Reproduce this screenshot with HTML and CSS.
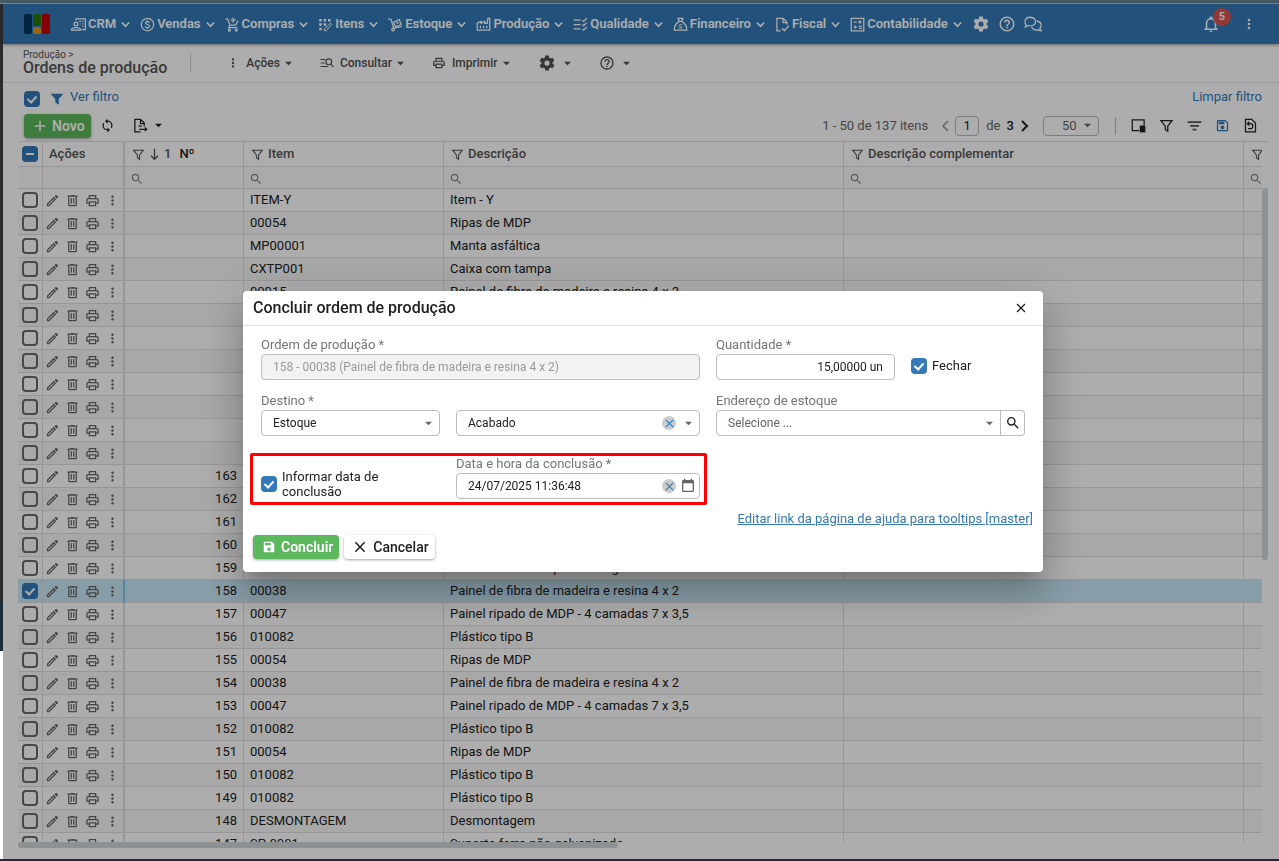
FILE: index.html
```html
<!DOCTYPE html>
<html lang="pt-BR">
<head>
<meta charset="utf-8">
<title>Ordens de produção</title>
<link rel="stylesheet" href="styles.css">
</head>
<body>
<svg class="sprite" aria-hidden="true">
  <symbol id="i-pencil" viewBox="0 0 24 24"><path d="M14.06,9L15,9.94L5.92,19H5V18.08L14.06,9M17.66,3C17.41,3 17.15,3.1 16.96,3.29L15.13,5.12L18.88,8.87L20.71,7.04C21.1,6.65 21.1,6 20.71,5.63L18.37,3.29C18.17,3.09 17.92,3 17.66,3M14.06,6.19L3,17.25V21H6.75L17.81,9.94L14.06,6.19Z"/></symbol>
  <symbol id="i-trash" viewBox="0 0 24 24"><path d="M9,3V4H4V6H5V19A2,2 0 0,0 7,21H17A2,2 0 0,0 19,19V6H20V4H15V3H9M7,6H17V19H7V6M9,8V17H11V8H9M13,8V17H15V8H13Z"/></symbol>
  <symbol id="i-print" viewBox="0 0 24 24"><path d="M19 8C20.66 8 22 9.34 22 11V17H18V21H6V17H2V11C2 9.34 3.34 8 5 8H6V3H18V8H19M8 5V8H16V5H8M16 19V15H8V19H16M18 15H20V11C20 10.45 19.55 10 19 10H5C4.45 10 4 10.45 4 11V15H6V13H18V15Z"/></symbol>
  <symbol id="i-dots" viewBox="0 0 24 24"><path d="M12,16A2,2 0 0,1 14,18A2,2 0 0,1 12,20A2,2 0 0,1 10,18A2,2 0 0,1 12,16M12,10A2,2 0 0,1 14,12A2,2 0 0,1 12,14A2,2 0 0,1 10,12A2,2 0 0,1 12,10M12,4A2,2 0 0,1 14,6A2,2 0 0,1 12,8A2,2 0 0,1 10,6A2,2 0 0,1 12,4Z"/></symbol>
  <symbol id="i-cog" viewBox="0 0 24 24"><path d="M12,15.5A3.5,3.5 0 0,1 8.5,12A3.5,3.5 0 0,1 12,8.5A3.5,3.5 0 0,1 15.5,12A3.5,3.5 0 0,1 12,15.5M19.43,12.97C19.47,12.65 19.5,12.33 19.5,12C19.5,11.67 19.47,11.34 19.43,11L21.54,9.37C21.73,9.22 21.78,8.95 21.66,8.73L19.66,5.27C19.54,5.05 19.27,4.96 19.05,5.05L16.56,6.05C16.04,5.66 15.5,5.32 14.87,5.07L14.5,2.42C14.46,2.18 14.25,2 14,2H10C9.75,2 9.54,2.18 9.5,2.42L9.13,5.07C8.5,5.32 7.96,5.66 7.44,6.05L4.95,5.05C4.73,4.96 4.46,5.05 4.34,5.27L2.34,8.73C2.21,8.95 2.27,9.22 2.46,9.37L4.57,11C4.53,11.34 4.5,11.67 4.5,12C4.5,12.33 4.53,12.65 4.57,12.97L2.46,14.63C2.27,14.78 2.21,15.05 2.34,15.27L4.34,18.73C4.46,18.95 4.73,19.03 4.95,18.95L7.44,17.94C7.96,18.34 8.5,18.68 9.13,18.93L9.5,21.58C9.54,21.82 9.75,22 10,22H14C14.25,22 14.46,21.82 14.5,21.58L14.87,18.93C15.5,18.67 16.04,18.34 16.56,17.94L19.05,18.95C19.27,19.03 19.54,18.95 19.66,18.73L21.66,15.27C21.78,15.05 21.73,14.78 21.54,14.63L19.43,12.97Z"/></symbol>
  <symbol id="i-help" viewBox="0 0 24 24"><path d="M11,18H13V16H11V18M12,2A10,10 0 0,0 2,12A10,10 0 0,0 12,22A10,10 0 0,0 22,12A10,10 0 0,0 12,2M12,20C7.59,20 4,16.41 4,12C4,7.59 7.59,4 12,4C16.41,4 20,7.59 20,12C20,16.41 16.41,20 12,20M12,6A4,4 0 0,0 8,10H10A2,2 0 0,1 12,8A2,2 0 0,1 14,10C14,12 11,11.75 11,15H13C13,12.75 16,12.5 16,10A4,4 0 0,0 12,6Z"/></symbol>
  <symbol id="i-bell" viewBox="0 0 24 24"><path d="M10 21H14C14 22.1 13.1 23 12 23S10 22.1 10 21M21 19V20H3V19L5 17V11C5 7.9 7.03 5.17 10 4.29V4C10 2.9 10.9 2 12 2S14 2.9 14 4V4.29C16.97 5.17 19 7.9 19 11V17L21 19M17 11C17 8.24 14.76 6 12 6S7 8.24 7 11V18H17V11Z"/></symbol>
  <symbol id="i-funnel" viewBox="0 0 24 24"><path d="M1 3H23L15 12V22L9 18V12Z"/></symbol>
  <symbol id="i-filter" viewBox="0 0 24 24"><path d="M3 4H21L14 13V21L10 18V13Z" fill="none" stroke="currentColor" stroke-width="2"/></symbol>
  <symbol id="i-search" viewBox="0 0 24 24"><path d="M9.5,3A6.5,6.5 0 0,1 16,9.5C16,11.11 15.41,12.59 14.44,13.73L14.71,14H15.5L20.5,19L19,20.5L14,15.5V14.71L13.73,14.44C12.59,15.41 11.11,16 9.5,16A6.5,6.5 0 0,1 3,9.5A6.5,6.5 0 0,1 9.5,3M9.5,5C7,5 5,7 5,9.5C5,12 7,14 9.5,14C12,14 14,12 14,9.5C14,7 12,5 9.5,5Z"/></symbol>
  <symbol id="i-save" viewBox="0 0 24 24"><path d="M15,9H5V5H15M12,19A3,3 0 0,1 9,16A3,3 0 0,1 12,13A3,3 0 0,1 15,16A3,3 0 0,1 12,19M17,3H5C3.89,3 3,3.9 3,5V19A2,2 0 0,0 5,21H19A2,2 0 0,0 21,19V7L17,3Z"/></symbol>
  <symbol id="i-save-line" viewBox="0 0 24 24"><path d="M17 3H5C3.9 3 3 3.9 3 5V19C3 20.1 3.9 21 5 21H19C20.1 21 21 20.1 21 19V7L17 3M19 19H5V5H16.2L19 7.8V19M12 12C10.3 12 9 13.3 9 15S10.3 18 12 18 15 16.7 15 15 13.7 12 12 12M6 6H15V10H6V6Z"/></symbol>
  <symbol id="i-calendar" viewBox="0 0 24 24"><path d="M19,19H5V8H19M16,1V3H8V1H6V3H5C3.89,3 3,3.89 3,5V19A2,2 0 0,0 5,21H19A2,2 0 0,0 21,19V5C21,3.89 20.1,3 19,3H18V1"/></symbol>
  <symbol id="i-sync" viewBox="0 0 24 24"><path d="M12,18A6,6 0 0,1 6,12C6,11 6.25,10.03 6.7,9.2L5.24,7.74C4.46,8.97 4,10.43 4,12A8,8 0 0,0 12,20V23L16,19L12,15M12,4V1L8,5L12,9V6A6,6 0 0,1 18,12C18,13 17.75,13.97 17.3,14.8L18.76,16.26C19.54,15.03 20,13.57 20,12A8,8 0 0,0 12,4Z"/></symbol>
  <symbol id="i-close" viewBox="0 0 24 24"><path d="M4 4L20 20M20 4L4 20" fill="none" stroke="currentColor" stroke-width="2.6"/></symbol>
  <symbol id="i-plus" viewBox="0 0 24 24"><path d="M12 3V21M3 12H21" fill="none" stroke="currentColor" stroke-width="2.6"/></symbol>
  <symbol id="i-caret" viewBox="0 0 8 8"><path d="M0 2H8L4 6Z"/></symbol>
  <symbol id="i-chev" viewBox="0 0 8 8"><path d="M0.8 2.2L4 5.6L7.2 2.2" fill="none" stroke="currentColor" stroke-width="1.5"/></symbol>
  <symbol id="i-left" viewBox="0 0 8 12"><path d="M7 1L2 6L7 11" fill="none" stroke="currentColor" stroke-width="1.6"/></symbol>
  <symbol id="i-right" viewBox="0 0 8 12"><path d="M1 1L6 6L1 11" fill="none" stroke="currentColor" stroke-width="2"/></symbol>
  <symbol id="i-down" viewBox="0 0 12 16"><path d="M6 2V14M2 10L6 14L10 10" fill="none" stroke="currentColor" stroke-width="1.5"/></symbol>
  <symbol id="i-crm" viewBox="0 0 24 24"><g fill="none" stroke="currentColor" stroke-width="2"><path d="M8 5V3H23V20H17"/><circle cx="8" cy="11" r="3"/><path d="M1 20C1 16 15 16 15 20V21H1Z"/><path d="M13 7H16M18 7H20M15 11H16M18 11H20M18 15H20"/></g></symbol>
  <symbol id="i-money" viewBox="0 0 24 24"><g fill="none" stroke="currentColor" stroke-width="2"><circle cx="12" cy="12" r="10"/><path d="M15.5 9C15 7 9 6.500 8.800 9.500C8.800 12.500 15.500 11.500 15.500 14.500C15.200 17.500 9 17.500 8.500 15M12 5V7M12 17V19"/></g></symbol>
  <symbol id="i-cart" viewBox="0 0 24 24"><g fill="none" stroke="currentColor" stroke-width="2"><path d="M1 3H4L8 13H17L21 6M8 13L6 17H20M13 1V9M9 5H17"/><circle cx="7" cy="21" r="1.500"/><circle cx="18" cy="21" r="1.500"/></g></symbol>
  <symbol id="i-items" viewBox="0 0 24 24"><path d="M2 3H6V7H2ZM9 3H13V7H9ZM16 3H20V7H16ZM2 10H6V14H2ZM9 10H13V14H9ZM2 17H6V21H2Z"/><path d="M10 22V19L20 10L22 12L13 22Z" fill="none" stroke="currentColor" stroke-width="1.600"/></symbol>
  <symbol id="i-stock" viewBox="0 0 24 24"><g fill="none" stroke="currentColor" stroke-width="2"><path d="M0 3L5 4L9 18L22 15"/><circle cx="8" cy="20" r="2"/><path d="M9 8L18 4L21 12L12 16ZM13 6L15 10L17 9"/></g></symbol>
  <symbol id="i-factory" viewBox="0 0 24 24"><g fill="none" stroke="currentColor" stroke-width="2"><path d="M2 21V10L8 7V10L14 7V10H18L19 2H22V21ZM7 18V14M12 18V14M17 18V14"/></g></symbol>
  <symbol id="i-quality" viewBox="0 0 24 24"><path d="M1 5H12M1 12H12M1 19H12M15 5L17 7L22 2M15 12L17 14L22 9M15 19L17 21L22 16" fill="none" stroke="currentColor" stroke-width="2"/></symbol>
  <symbol id="i-bag" viewBox="0 0 24 24"><g fill="none" stroke="currentColor" stroke-width="2"><path d="M8 2H16L14 7H10ZM10 7C5 10 2 15 2 21H22C22 15 19 10 14 7"/><path d="M15 13C13 11 9 12 10 14C11 16 15 15 14 17C13 19 10 18 9 17" stroke-width="1.600"/></g></symbol>
  <symbol id="i-fiscal" viewBox="0 0 24 24"><g fill="none" stroke="currentColor" stroke-width="2"><path d="M9 22H3V2H13L19 8V12M13 2V9H19M11 18L15 22L22 14"/></g></symbol>
  <symbol id="i-calc" viewBox="0 0 24 24"><g fill="none" stroke="currentColor" stroke-width="2"><path d="M2 2H22V22H2Z"/><path d="M6 8H11M14 6L18 10M18 6L14 10M6 16H11M8.500 13.500V18.500M14 15H19M14 18H19"/></g></symbol>
  <symbol id="i-chat" viewBox="0 0 24 24"><g fill="none" stroke="currentColor" stroke-width="1.700"><path d="M3 14C0 10 1 3 8 3C15 3 16 8 15 11C14 14 9 15 6 14L2 16Z"/><path d="M17 8C24 9 24 15 21 18L23 21L17 20C13 20 11 18 10 16"/></g></symbol>
  <symbol id="i-listfind" viewBox="0 0 24 24"><g fill="none" stroke="currentColor" stroke-width="2"><path d="M1 6H9M1 12H8M1 18H14M18.500 14L23 19"/><circle cx="15" cy="10" r="5"/></g></symbol>
  <symbol id="i-export" viewBox="0 0 24 24"><g fill="none" stroke="currentColor" stroke-width="2"><path d="M12 22H3V2H12L18 8V13M12 2V9H18M10 18H22M19 15L22 18L19 21M9 13H14"/></g></symbol>
  <symbol id="i-layout" viewBox="0 0 24 24"><path d="M13 20H2V3H21V11" fill="none" stroke="currentColor" stroke-width="2"/><path d="M14 12H23V23H14Z"/></symbol>
  <symbol id="i-sort" viewBox="0 0 24 24"><path d="M1 5H23V8H1ZM5 11H19V14H5ZM9 17H15V20H9Z" fill="#555"/></symbol>
  <symbol id="i-restore" viewBox="0 0 24 24"><g fill="none" stroke="currentColor" stroke-width="2"><path d="M4 2H14L20 8V22H4ZM8 9H12C17 9 17 17 12 17H8M10 6L7 9L10 12"/></g></symbol>
</svg>

<div class="frame-top"></div>
<div class="window">
  <div class="frame-left"></div>
  <div class="app">
    <nav class="nav">
      <svg class="logo" viewBox="0 0 26 20"><rect width="8" height="20" rx="2" fill="#00355f"/><rect x="9" width="8" height="12" rx="2" fill="#2a7a0c"/><rect x="9" y="13" width="8" height="7" rx="2" fill="#e09a1a"/><rect x="18" width="8" height="20" rx="2" fill="#c40000"/></svg>
      <div class="menus">
        <button><svg><use href="#i-crm"/></svg>CRM<svg class="chev"><use href="#i-chev"/></svg></button>
        <button><svg><use href="#i-money"/></svg>Vendas<svg class="chev"><use href="#i-chev"/></svg></button>
        <button><svg><use href="#i-cart"/></svg>Compras<svg class="chev"><use href="#i-chev"/></svg></button>
        <button><svg><use href="#i-items"/></svg>Itens<svg class="chev"><use href="#i-chev"/></svg></button>
        <button><svg><use href="#i-stock"/></svg>Estoque<svg class="chev"><use href="#i-chev"/></svg></button>
        <button><svg><use href="#i-factory"/></svg>Produção<svg class="chev"><use href="#i-chev"/></svg></button>
        <button><svg><use href="#i-quality"/></svg>Qualidade<svg class="chev"><use href="#i-chev"/></svg></button>
        <button><svg><use href="#i-bag"/></svg>Financeiro<svg class="chev"><use href="#i-chev"/></svg></button>
        <button><svg><use href="#i-fiscal"/></svg>Fiscal<svg class="chev"><use href="#i-chev"/></svg></button>
        <button><svg><use href="#i-calc"/></svg>Contabilidade<svg class="chev"><use href="#i-chev"/></svg></button>
        <button class="big" aria-label="Configurações"><svg><use href="#i-cog"/></svg></button>
        <button class="big" aria-label="Ajuda"><svg><use href="#i-help"/></svg></button>
        <button class="big" aria-label="Mensagens"><svg><use href="#i-chat"/></svg></button>
      </div>
      <button class="big bell" aria-label="Notificações"><svg><use href="#i-bell"/></svg><span class="badge">5</span></button>
      <button class="more" aria-label="Mais"><svg><use href="#i-dots"/></svg></button>
    </nav>

    <header class="head">
      <div class="title"><span class="crumb">Produção &gt;</span><h1>Ordens de produção</h1></div>
      <div class="head-menus">
        <button><svg><use href="#i-dots"/></svg>Ações<svg class="caret"><use href="#i-caret"/></svg></button>
        <button><svg><use href="#i-listfind"/></svg>Consultar<svg class="caret"><use href="#i-caret"/></svg></button>
        <button><svg><use href="#i-print"/></svg>Imprimir<svg class="caret"><use href="#i-caret"/></svg></button>
        <button class="only" aria-label="Opções"><svg class="cog"><use href="#i-cog"/></svg><svg class="caret"><use href="#i-caret"/></svg></button>
        <button class="only" aria-label="Ajuda"><svg class="help"><use href="#i-help"/></svg><svg class="caret"><use href="#i-caret"/></svg></button>
      </div>
    </header>

    <main class="main">
      <div class="filterbar">
        <input type="checkbox" class="check" checked aria-label="Filtro ativo">
        <a href="#"><svg class="funnel"><use href="#i-funnel"/></svg><span>Ver filtro</span></a>
        <a href="#" class="clear"><span>Limpar filtro</span></a>
      </div>
      <div class="toolbar">
        <button class="btn green"><svg><use href="#i-plus"/></svg>Novo</button>
        <button class="tool sync" aria-label="Atualizar"><svg><use href="#i-sync"/></svg></button>
        <button class="tool export" aria-label="Exportar"><svg><use href="#i-export"/></svg><svg class="caret"><use href="#i-caret"/></svg></button>
        <div class="pager">
          <span class="count">1 - 50 de 137 itens</span>
          <button class="tool prev" aria-label="Anterior"><svg class="arrow"><use href="#i-left"/></svg></button>
          <input class="page" value="1" aria-label="Página">
          <span class="of">de <b>3</b></span>
          <button class="tool next" aria-label="Próxima"><svg class="arrow"><use href="#i-right"/></svg></button>
          <span class="pick size"><select aria-label="Itens por página"><option>50</option></select><svg class="caret"><use href="#i-caret"/></svg></span>
        </div>
        <div class="views">
          <button class="tool" aria-label="Colunas"><svg><use href="#i-layout"/></svg></button>
          <button class="tool" aria-label="Filtrar"><svg><use href="#i-filter"/></svg></button>
          <button class="tool" aria-label="Ordenar"><svg><use href="#i-sort"/></svg></button>
          <button class="tool save" aria-label="Salvar"><svg><use href="#i-save-line"/></svg></button>
          <button class="tool" aria-label="Restaurar"><svg><use href="#i-restore"/></svg></button>
        </div>
      </div>
      <div class="grid">
        <div class="rows">
          <table>
            <colgroup><col class="c-sel"><col class="c-act"><col class="c-num"><col class="c-item"><col class="c-desc"><col class="c-desc"><col class="c-desc"></colgroup>
            <thead>
              <tr class="names">
                <th><span class="minus"><input type="checkbox" class="check" checked aria-label="Selecionar todos"></span></th>
                <th class="act">Ações</th>
                <th><div><svg><use href="#i-filter"/></svg><svg class="down"><use href="#i-down"/></svg><span class="order">1</span><b>Nº</b></div></th>
                <th><div><svg><use href="#i-filter"/></svg>Item</div></th>
                <th><div><svg><use href="#i-filter"/></svg>Descrição</div></th>
                <th><div><svg><use href="#i-filter"/></svg>Descrição complementar</div></th>
                <th><div><svg><use href="#i-filter"/></svg></div></th>
              </tr>
              <tr class="find"><td></td><td class="act"></td><td><svg><use href="#i-search"/></svg></td><td><svg><use href="#i-search"/></svg></td><td><svg><use href="#i-search"/></svg></td><td><svg><use href="#i-search"/></svg></td><td><svg><use href="#i-search"/></svg></td></tr>
            </thead>
            <tbody id="orders"></tbody>
          </table>
        </div>
        <div class="gutter"><div class="gutter-head"></div><div class="thumb-v"></div></div>
        <div class="track-h"><div class="thumb-h"></div></div>
      </div>
    </main>
  </div>
</div>
<div class="frame-bottom"></div>

<div class="overlay">
  <section class="dialog" role="dialog" aria-labelledby="dlg-title">
    <header><h2 id="dlg-title">Concluir ordem de produção</h2><button class="x" aria-label="Fechar janela"><svg><use href="#i-close"/></svg></button></header>
    <form class="form">
      <div class="field f-order"><label for="order">Ordem de produção *</label><input id="order" class="box" disabled value="158 - 00038 (Painel de fibra de madeira e resina 4 x 2)"></div>
      <div class="field f-qty"><label for="qty">Quantidade *</label><input id="qty" class="box num" value="15,00000 un"></div>
      <label class="tick f-close"><input type="checkbox" class="check" checked>Fechar</label>

      <div class="field f-dest"><label for="dest">Destino *</label><span class="pick"><select id="dest" class="box"><option>Estoque</option></select><svg class="caret"><use href="#i-caret"/></svg></span></div>
      <div class="field f-type"><span class="pick"><select class="box" aria-label="Tipo de estoque"><option>Acabado</option></select><button type="button" class="wipe" aria-label="Limpar"><svg><use href="#i-close"/></svg></button><svg class="caret"><use href="#i-caret"/></svg></span></div>
      <div class="field f-addr"><label for="addr">Endereço de estoque</label><div class="group"><span class="pick"><select id="addr" class="box hint"><option>Selecione ...</option></select><svg class="caret"><use href="#i-caret"/></svg></span><button type="button" class="look" aria-label="Pesquisar"><svg><use href="#i-search"/></svg></button></div></div>

      <div class="marked">
        <label class="tick f-inform"><input type="checkbox" class="check" checked><span>Informar data de conclusão</span></label>
        <div class="field f-date"><label for="date">Data e hora da conclusão *</label><span class="pick"><input id="date" class="box" value="24/07/2025 11:36:48"><button type="button" class="wipe" aria-label="Limpar data"><svg><use href="#i-close"/></svg></button><svg class="cal"><use href="#i-calendar"/></svg></span></div>
      </div>
    </form>
    <p class="tip"><a href="#">Editar link da página de ajuda para tooltips [master]</a></p>
    <footer><button class="btn green"><svg><use href="#i-save"/></svg>Concluir</button><button class="btn plain"><svg><use href="#i-close"/></svg>Cancelar</button></footer>
  </section>
</div>
<script src="rows.js"></script>
</body>
</html>
```
FILE: styles.css
```css
* { box-sizing: border-box; }
html, body { height: 100%; }
body { margin: 0; display: flex; flex-direction: column; background: #fff; color: #212121; font: 13px/16px Roboto, sans-serif; overflow: hidden; }
button, input, select { font: inherit; color: inherit; }
button { border: 0; padding: 0; background: none; display: inline-flex; align-items: center; }
svg { width: 16px; height: 16px; fill: currentColor; flex: none; display: block; }
a { color: #337ab7; text-decoration: none; }
.sprite { position: absolute; width: 0; height: 0; }

.frame-top { height: 4px; background: #455962; border-bottom: 1px solid #7b8d95; flex: none; }
.frame-bottom { height: 2px; background: #1b2a4a; flex: none; }
.window { flex: 1; min-height: 0; display: flex; }
.frame-left { width: 3px; height: 647px; background: linear-gradient(#2b2b2b 597px, #1c2e3a 597px); }
.app { flex: 1; min-width: 0; display: flex; flex-direction: column; background: #fff; }

.nav { height: 40px; flex: none; display: flex; align-items: center; padding: 0 22px 0 21px; background: #337ab7; color: #fff; box-shadow: 0 1px 3px rgba(0,0,0,.4); }
.logo { width: 26px; height: 20px; margin-right: 21px; }
.menus { flex: 1; display: flex; align-items: center; gap: 10px; }
.nav button { font-weight: 600; gap: 2px; }
.menus svg { width: 15px; height: 15px; }
.menus .chev { width: 9px; height: 9px; margin-left: 3px; }
.nav .big svg { width: 18px; height: 18px; }
.nav .big { margin-right: -2px; }
.bell { position: relative; }
.nav .bell { margin-right: 21px; }
.badge { position: absolute; left: 11px; top: -7px; width: 18px; height: 18px; line-height: 18px; border-radius: 9px; background: #d9534f; font-size: 11px; text-align: center; }

.head { height: 39px; flex: none; display: flex; align-items: center; padding-left: 20px; border-bottom: 1px solid #e4e4e4; color: #555; }
.title { border-right: 1px solid #d5d5d5; padding-right: 23px; height: 20px; display: flex; flex-direction: column; justify-content: center; }
.crumb { font-size: 10px; line-height: 10px; }
h1 { margin: 0; font-size: 16px; line-height: 16px; font-weight: 500; white-space: nowrap; }
.head-menus { display: flex; gap: 28px; margin-left: 35px; font-size: 12px; font-weight: 500; color: #505050; }
.head-menus button { gap: 5px; }
.head-menus svg { width: 14px; height: 14px; margin-right: 1px; }
.head-menus .cog { width: 18px; height: 18px; }
svg.caret, .head-menus .caret, .tool .caret { width: 7px; height: 7px; margin: 0; }
.head-menus .only { gap: 7px; }
.head-menus .help { width: 16px; height: 16px; }

.main { flex: 1; min-height: 0; display: flex; flex-direction: column; padding: 5px 11px 11px 15px; }
.filterbar { display: flex; align-items: center; height: 22px; padding: 0 6px; }
.filterbar a { display: flex; align-items: center; margin-left: 10px; gap: 6px; }
.filterbar span { padding-bottom: 4px; }
.filterbar .clear { margin-left: auto; }
.filterbar .funnel { width: 14px; height: 14px; }
.check { appearance: none; width: 16px; height: 16px; margin: 0; border: 2px solid #6a6a6a; border-radius: 4px; flex: none; display: block; }
.check:checked { border: 0; background: #337ab7; position: relative; }
.check:checked::after { content: ""; position: absolute; left: 5px; top: 3px; width: 4px; height: 7px; border: solid #fff; border-width: 0 2px 2px 0; transform: rotate(42deg); }
.minus .check:checked::after { left: 4px; top: 7px; width: 8px; height: 2px; border: 0; background: #fff; transform: none; }

.toolbar { display: flex; align-items: center; height: 31px; padding: 0 10px 0 6px; }
.btn { height: 24px; border-radius: 4px; padding: 0 6px 0 9px; gap: 5px; font-size: 14px; font-weight: 600; box-shadow: 0 1px 3px rgba(0,0,0,.35); }
.btn svg { width: 14px; height: 14px; }
.green { background: #5cb85c; color: #fff; }
.tool svg { width: 15px; height: 15px; }
.tool .arrow { width: 8px; height: 12px; }
.sync { margin-left: 9px; }
.export { margin-left: 18px; gap: 7px; }
.pager { margin-left: auto; display: flex; align-items: center; color: #666; }
.prev { color: #999; margin: 0 6px 0 13px; }
.page { width: 24px; height: 20px; border: 1px solid #bbb; border-radius: 4px; text-align: center; color: #212121; padding: 0; background: none; }
.of { margin: 0 7px; }
.of b { color: #212121; font-weight: 500; margin-left: 3px; }
.next { color: #212121; }
.pick { position: relative; display: flex; align-items: center; width: 100%; }
.pick select { appearance: none; flex: 1; }
.pick > .caret { position: absolute; right: 8px; pointer-events: none; color: #666; }
.size { margin-left: 14px; }
.size select { width: 56px; height: 20px; border: 1px solid #bbb; border-radius: 4px; background: none; padding: 0 0 0 18px; }
.views { display: flex; gap: 13px; margin-left: 16px; padding-left: 15px; border-left: 1px solid #bbb; height: 18px; align-items: center; }
.save { color: #337ab7; }

.grid { flex: 1; min-height: 0; display: grid; grid-template: minmax(0, 1fr) 6px / minmax(0, 1fr) 6px; }
.rows { overflow: hidden; border-top: 1px solid #dedede; }
table { table-layout: fixed; width: 1625px; border-collapse: separate; border-spacing: 0; }
.c-sel { width: 25px; } .c-act { width: 82px; } .c-num { width: 119px; } .c-item { width: 200px; } .c-desc { width: 400px; }
th, td { border: solid #dedede; border-width: 0 1px 1px 0; padding: 0 6px; text-align: left; font-weight: 400; white-space: nowrap; }
th:first-child, td:first-child { padding: 0 4px; }
.act { border-right-width: 2px; }
th { height: 25px; font-weight: 500; color: #555; }
th div { display: flex; align-items: center; gap: 4px; padding-left: 1px; }
th svg { width: 13px; height: 13px; }
th .down { width: 11px; height: 14px; }
th b { font-weight: 500; color: #212121; margin-left: 4px; }
.find td { height: 22px; background: #fbfbfb; padding-top: 3px; padding-left: 5px; }
.find svg { width: 14px; height: 14px; color: #888; }
tbody td { height: 23px; }
tbody tr:nth-child(even) td { background: #f8f8f8; }
tbody .sel td, tbody tr.sel:nth-child(even) td { background: #c8e8f8; }
.sel .act { border-right-color: #7cc4e8; }
tbody .num { text-align: right; }
.acts { display: flex; gap: 5px; margin-left: -4px; color: #666; }
.acts svg { width: 15px; height: 15px; }
.gutter-head { height: 48px; border: solid #dedede; border-width: 1px 0; }
.thumb-v { height: 371px; background: #ced6da; border-radius: 3px; }
.thumb-h { width: 600px; height: 6px; background: #ced6da; border-radius: 3px; }

.overlay { position: fixed; inset: 4px 0 2px 3px; padding-left: 4px; background: rgba(0,0,0,.32); display: flex; align-items: center; justify-content: center; }
.dialog { width: 800px; max-width: 96%; background: #fff; border-radius: 4px; padding-bottom: 13px; box-shadow: 0 11px 15px -7px rgba(0,0,0,.2), 0 24px 38px 3px rgba(0,0,0,.14), 0 9px 46px 8px rgba(0,0,0,.12); }
.dialog header { display: flex; align-items: center; justify-content: space-between; height: 35px; padding: 0 16px 0 10px; border-bottom: 1px solid #e0e0e0; }
h2 { margin: 0; font-size: 16px; line-height: 20px; font-weight: 500; }
.x svg { width: 12px; height: 12px; }
.form { display: grid; grid-template-columns: 179fr 244fr 179fr 114fr; column-gap: 16px; padding: 11px 18px 0; }
.field { display: flex; flex-direction: column; justify-content: flex-end; gap: 1px; min-width: 0; }
.field label { color: #757575; line-height: 16px; }
.box { width: 100%; height: 26px; border: 1px solid #bdbdbd; border-radius: 4px; padding: 0 11px; font-size: 12px; background: #fff; color: #212121; }
.box:disabled { background: #f2f2f2; color: #9a9a9a; }
.num.box { text-align: right; }
.hint.box { color: #666; }
.f-order { grid-column: 1 / 3; }
.f-order, .f-qty { height: 43px; }
.f-dest, .f-type, .f-addr { height: 56px; }
.f-addr { grid-column: 3 / 5; }
.f-close { align-self: end; height: 29px; }
.size.pick { width: auto; }
.group { display: flex; }
.group .pick { flex: 1; }
.group .box { border-radius: 4px 0 0 4px; }
.look { width: 24px; height: 26px; border: 1px solid #bdbdbd; border-left: 0; border-radius: 0 4px 4px 0; justify-content: center; }
.tick { display: flex; align-items: center; gap: 5px; line-height: 15px; }
.wipe { position: absolute; right: 24px; width: 14px; height: 14px; border-radius: 7px; background: #ccc; color: #337ab7; justify-content: center; }
.wipe svg { width: 11px; height: 11px; }
.cal { position: absolute; right: 4px; color: #666; }
.marked { grid-column: 1 / 3; display: grid; grid-template-columns: 179fr 244fr; column-gap: 16px; margin: 17px -7px 0 -11px; padding: 0 4px 3px 8px; border: 3px solid #f00; border-radius: 2px; }
.f-inform { padding: 12px 40px 0 0; }
.tip { margin: 6px 10px 0; text-align: right; line-height: 16px; }
.tip a { text-decoration: underline; }
.dialog footer { display: flex; gap: 5px; padding: 8px 10px 0; }
.plain { background: #fff; font-weight: 500; gap: 6px; }
```
FILE: rows.js
```js
const P = "Painel de fibra de madeira e resina 4 x 2";
const R = "Painel ripado de MDP - 4 camadas 7 x 3,5";
const orders = [
  ["", "ITEM-Y", "Item - Y"], ["", "00054", "Ripas de MDP"], ["", "MP00001", "Manta asfáltica"],
  ["", "CXTP001", "Caixa com tampa"], ["", "00015", P], ["", "", ""], ["", "", ""], ["", "", ""],
  ["", "", ""], ["", "", ""], ["", "", ""], ["", "", ""],
  ["163", "", ""], ["162", "", ""], ["161", "", ""], ["160", "", ""],
  ["159", "", "Caixa de madeira para entrega"],
  ["158", "00038", P], ["157", "00047", R], ["156", "010082", "Plástico tipo B"],
  ["155", "00054", "Ripas de MDP"], ["154", "00038", P], ["153", "00047", R],
  ["152", "010082", "Plástico tipo B"], ["151", "00054", "Ripas de MDP"],
  ["150", "010082", "Plástico tipo B"], ["149", "010082", "Plástico tipo B"],
  ["148", "DESMONTAGEM", "Desmontagem"], ["147", "SP-0001", "Suporte ferro não galvanizado"]
];
const icon = id => `<svg><use href="#i-${id}"/></svg>`;
const acts = `<div class="acts">${["pencil", "trash", "print", "dots"].map(icon).join("")}</div>`;
document.getElementById("orders").innerHTML = orders.map(([n, item, desc]) => {
  const on = n === "158";
  return `<tr${on ? ' class="sel"' : ""}><td><input type="checkbox" class="check" aria-label="Selecionar ${n || item}"${on ? " checked" : ""}></td>` +
    `<td class="act">${acts}</td><td class="num">${n}</td><td>${item}</td><td>${desc}</td><td></td><td></td></tr>`;
}).join("");
```
